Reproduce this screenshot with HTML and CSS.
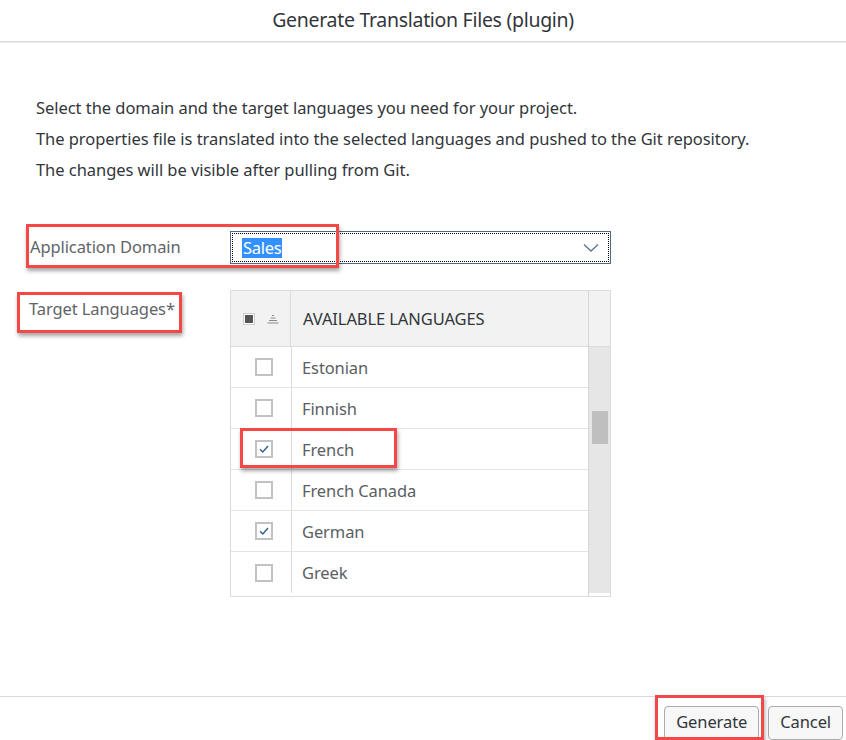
FILE: index.html
```html
<!DOCTYPE html>
<html lang="en">
<head>
<meta charset="utf-8">
<title>Generate Translation Files (plugin)</title>
<link rel="stylesheet" href="styles.css">
</head>
<body>
<div class="dialog">
  <header class="dlg-header">Generate Translation Files (plugin)</header>
  <main class="dlg-content">
    <div class="intro">
      <p>Select the domain and the target languages you need for your project.</p>
      <p>The properties file is translated into the selected languages and pushed to the Git repository.</p>
      <p>The changes will be visible after pulling from Git.</p>
    </div>
    <div class="form">
      <div class="form-row row-domain">
        <label class="lbl lbl-domain">Application Domain</label>
        <div class="select">
          <span class="select-focus"></span>
          <span class="select-value">Sales</span>
          <svg class="chev" width="16" height="10" viewBox="0 0 16 10"><path d="M1 1.5 L8 8 L15 1.5" fill="none" stroke="#5b738b" stroke-width="1.3"/></svg>
        </div>
      </div>
      <div class="form-row row-langs">
        <label class="lbl lbl-langs">Target Languages*</label>
        <div class="table">
          <div class="tbl-body">
            <div class="tr th">
              <div class="c-sel">
                <span class="all-cb"><span class="all-fill"></span></span>
                <svg class="sort" width="12" height="10" viewBox="0 0 12 10"><path d="M5 1.5h2M3.5 4h5M2 6.5h8M0.5 9h11" stroke="#8a8a8a" stroke-width="1"/></svg>
              </div>
              <div class="c-name">AVAILABLE LANGUAGES</div>
            </div>
            <div class="tr"><div class="c-sel"><span class="cb"></span></div><div class="c-name">Estonian</div></div>
            <div class="tr"><div class="c-sel"><span class="cb"></span></div><div class="c-name">Finnish</div></div>
            <div class="tr"><div class="c-sel"><span class="cb on"><svg width="12" height="10" viewBox="0 0 12 10"><path d="M2 5.2 L4.8 8 L10 2" fill="none" stroke="#2d5f8e" stroke-width="1.4"/></svg></span></div><div class="c-name">French</div></div>
            <div class="tr"><div class="c-sel"><span class="cb"></span></div><div class="c-name">French Canada</div></div>
            <div class="tr"><div class="c-sel"><span class="cb on"><svg width="12" height="10" viewBox="0 0 12 10"><path d="M2 5.2 L4.8 8 L10 2" fill="none" stroke="#2d5f8e" stroke-width="1.4"/></svg></span></div><div class="c-name">German</div></div>
            <div class="tr last"><div class="c-sel"><span class="cb"></span></div><div class="c-name">Greek</div></div>
          </div>
          <div class="vscroll">
            <div class="vs-head"></div>
            <div class="vs-track"><span class="vs-thumb"></span></div>
          </div>
        </div>
      </div>
    </div>
  </main>
  <footer class="dlg-footer">
    <button class="btn">Generate</button>
    <button class="btn">Cancel</button>
  </footer>
  <span class="mark mark-domain"></span>
  <span class="mark mark-langs"></span>
  <span class="mark mark-french"></span>
  <span class="mark mark-generate"></span>
</div>
</body>
</html>
```

FILE: styles.css
```css
html, body {
  margin: 0;
  padding: 0;
  background: #ffffff;
}
body {
  font-family: "Noto Sans", "Open Sans", "Liberation Sans", sans-serif;
  color: #32363a;
}
.dialog {
  position: relative;
  width: 846px;
  height: 740px;
  display: flex;
  flex-direction: column;
  overflow: hidden;
}
.dlg-header {
  flex: 0 0 42px;
  border-bottom: 1px solid #d9d9d9;
  box-shadow: 0 1px 0 #eeeeee;
  display: flex;
  align-items: center;
  justify-content: center;
  font-size: 19.5px;
  letter-spacing: -0.3px;
  color: #32363a;
  padding-bottom: 2px;
  box-sizing: border-box;
}
.dlg-content {
  flex: 1;
  padding: 50px 0 0 0;
}
.intro {
  padding-left: 36px;
}
.intro p {
  margin: 0;
  font-size: 16.5px;
  line-height: 31px;
  color: #32363a;
  letter-spacing: -0.05px;
}
.form {
  margin-top: 46px;
  padding-left: 30px;
}
.form-row {
  display: grid;
  grid-template-columns: 200px 381px;
}
.row-langs {
  margin-top: 26px;
}
.lbl {
  font-size: 16.5px;
  color: #5f6468;
  letter-spacing: -0.1px;
}
.lbl-domain {
  line-height: 31px;
}
.lbl-langs {
  line-height: 38px;
  margin-left: -1px;
}
.select {
  position: relative;
  height: 33px;
  box-sizing: border-box;
  border: 1px solid #4e6a86;
  display: flex;
  align-items: center;
  padding-left: 11px;
}
.select-focus {
  position: absolute;
  inset: 1px;
  border: 1px dotted #000000;
}
.select-value {
  background: #3390ff;
  color: #ffffff;
  font-size: 16.5px;
  line-height: 20px;
  padding: 0 1px;
  letter-spacing: -0.3px;
}
.chev {
  margin-left: auto;
  margin-right: 11px;
}
.table {
  height: 307px;
  box-sizing: border-box;
  border: 1px solid #dcdcdc;
  display: flex;
}
.tbl-body {
  flex: 1;
}
.tr {
  display: flex;
  height: 41px;
  border-bottom: 1px solid #e4e4e4;
  box-sizing: border-box;
}
.tr.last {
  border-bottom: none;
}
.tr.th {
  height: 56px;
  background: #f2f2f2;
  border-bottom: 1px solid #dcdcdc;
}
.c-sel {
  width: 60px;
  border-right: 1px solid #dcdcdc;
  display: flex;
  align-items: center;
  justify-content: center;
}
.th .c-sel {
  justify-content: flex-start;
  padding-left: 12px;
  gap: 12px;
  box-sizing: border-box;
}
.all-cb {
  width: 12px;
  height: 12px;
  border: 1px solid #cfcfcf;
  background: #ffffff;
  box-sizing: border-box;
  display: flex;
  align-items: center;
  justify-content: center;
}
.all-fill {
  width: 8px;
  height: 8px;
  background: #555555;
}
.c-name {
  flex: 1;
  display: flex;
  align-items: center;
  padding-left: 10px;
  font-size: 16.5px;
  color: #5a5e62;
  letter-spacing: -0.1px;
}
.th .c-name {
  color: #32363a;
  padding-left: 12px;
}
.cb {
  width: 18px;
  height: 18px;
  box-sizing: border-box;
  border: 2px solid #c2c2c2;
  background: #ffffff;
  display: flex;
  align-items: center;
  justify-content: center;
  margin-left: 6px;
}
.vscroll {
  flex: 0 0 21px;
  display: flex;
  flex-direction: column;
  border-left: 1px solid #d6d6d6;
}
.vs-head {
  flex: 0 0 56px;
  background: #f2f2f2;
  border-bottom: 1px solid #dcdcdc;
  box-sizing: border-box;
}
.vs-track {
  flex: 0 0 246px;
  box-sizing: border-box;
  background: #e6e6e6;
  padding-top: 64px;
  display: flex;
  justify-content: center;
  align-items: flex-start;
}
.vs-thumb {
  width: 16px;
  height: 33px;
  background: #bfbfbf;
}
.dlg-footer {
  flex: 0 0 44px;
  box-sizing: border-box;
  border-top: 1px solid #d9d9d9;
  display: flex;
  justify-content: flex-end;
  align-items: flex-start;
  gap: 9px;
  padding: 9px 3px 0 0;
}
.btn {
  font-family: "Noto Sans", "Open Sans", "Liberation Sans", sans-serif;
  font-size: 16.5px;
  color: #32363a;
  background: #f7f7f7;
  border: 1px solid #ababab;
  border-radius: 4px;
  height: 34px;
  padding: 0 11px 4px;
  letter-spacing: -0.1px;
}
.mark {
  position: absolute;
  border: 3px solid #f44848;
  box-shadow: 1px 3px 4px rgba(0, 0, 0, 0.35);
  box-sizing: border-box;
}
.mark-domain {
  left: 26px;
  top: 224px;
  width: 313px;
  height: 44px;
}
.mark-langs {
  left: 17px;
  top: 292px;
  width: 165px;
  height: 41px;
}
.mark-french {
  left: 240px;
  top: 428px;
  width: 157px;
  height: 40px;
}
.mark-generate {
  left: 655px;
  top: 695px;
  width: 109px;
  height: 45px;
}
```
